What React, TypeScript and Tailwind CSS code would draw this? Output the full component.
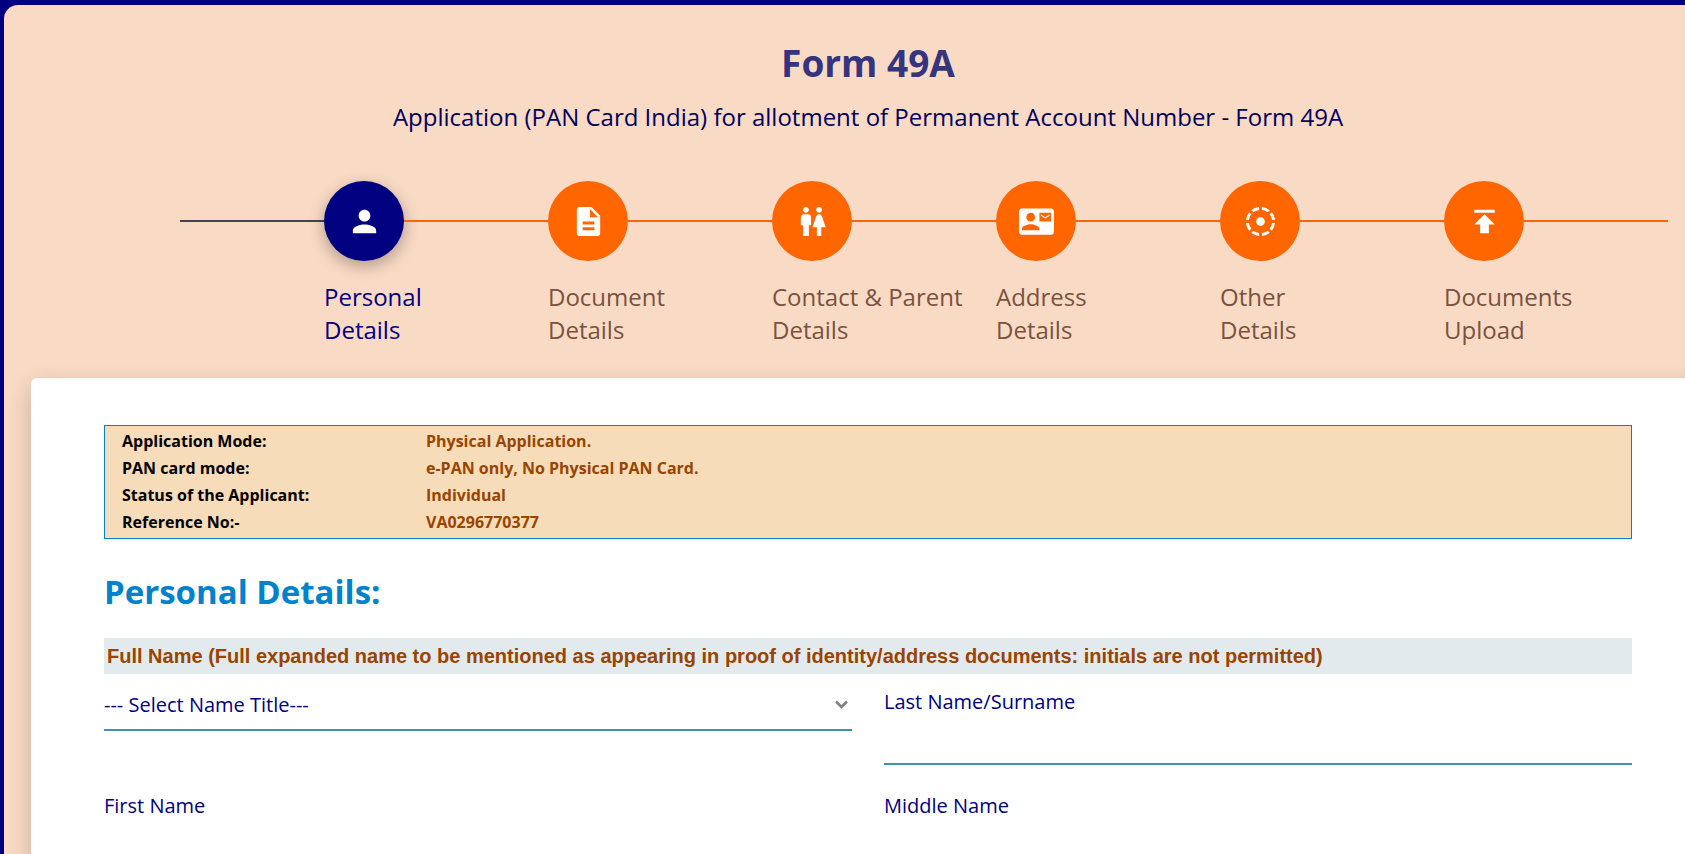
import type { IconType } from "react-icons";
import {
  MdContactMail,
  MdDescription,
  MdFilterTiltShift,
  MdPerson,
  MdPublish,
  MdWc,
} from "react-icons/md";

type Step = { lines: [string, string]; icon: IconType; active?: boolean };

const steps: Step[] = [
  { lines: ["Personal", "Details"], icon: MdPerson, active: true },
  { lines: ["Document", "Details"], icon: MdDescription },
  { lines: ["Contact & Parent", "Details"], icon: MdWc },
  { lines: ["Address", "Details"], icon: MdContactMail },
  { lines: ["Other", "Details"], icon: MdFilterTiltShift },
  { lines: ["Documents", "Upload"], icon: MdPublish },
];

const summary = [
  ["Application Mode:", "Physical Application."],
  ["PAN card mode:", "e-PAN only, No Physical PAN Card."],
  ["Status of the Applicant:", "Individual"],
  ["Reference No:-", "VA0296770377"],
];

function StepItem({ step }: { step: Step }) {
  const Icon = step.icon;
  return (
    <li className="min-w-0 flex-1" aria-current={step.active ? "step" : undefined}>
      <div className="flex items-center">
        <button
          type="button"
          aria-label={step.lines.join(" ")}
          className={
            step.active
              ? "flex size-20 shrink-0 items-center justify-center rounded-full bg-[#000080] text-white shadow-[0_5px_16px_rgba(0,0,0,0.3)]"
              : "flex size-20 shrink-0 items-center justify-center rounded-full bg-[#ff6600] text-white"
          }
        >
          <Icon className="size-[35px]" aria-hidden="true" />
        </button>
        <span className="h-[2px] flex-1 bg-[#ff6600]" />
      </div>
      <p
        className={
          step.active
            ? "mt-[19px] text-2xl leading-[33px] text-[#000080]"
            : "mt-[19px] text-2xl leading-[33px] text-[#7a5240]"
        }
      >
        <span className="block whitespace-nowrap">{step.lines[0]}</span>
        <span className="block whitespace-nowrap">{step.lines[1]}</span>
      </p>
    </li>
  );
}

function TextField({ id, label }: { id: string; label: string }) {
  return (
    <div className="flex flex-col">
      <label htmlFor={id} className="text-xl leading-7">
        {label}
      </label>
      <input
        id={id}
        type="text"
        className="h-[49px] w-full border-b-2 border-[#4192b0] bg-transparent text-xl outline-none"
      />
    </div>
  );
}

export default function App() {
  return (
    <div className="h-screen overflow-hidden bg-[#000080] pt-[5px] pl-1 font-['Open_Sans','Noto_Sans',sans-serif]">
      <main className="min-h-full w-[calc(100%+47px)] rounded-tl-[14px] bg-[#f9dac5] px-[27px] pt-9">
        <header className="text-center">
          <h1 className="text-[37px] leading-[44px] font-bold text-[#34347f]">Form 49A</h1>
          <p className="mt-[15px] text-2xl leading-[33px] text-[#00005c]">
            Application (PAN Card India) for allotment of Permanent Account Number - Form 49A
          </p>
        </header>

        <nav aria-label="Form steps" className="mt-12 flex pr-[37px] pl-[149px]">
          <span className="mt-[39px] h-[2px] w-36 shrink-0 bg-[#444450]" />
          <ol className="flex min-w-0 flex-1">
            {steps.map((step) => (
              <StepItem key={step.lines.join(" ")} step={step} />
            ))}
          </ol>
        </nav>

        <section className="mt-8 min-h-[600px] rounded-t-md bg-white px-[73px] pt-[47px] shadow-[0_8px_24px_rgba(0,0,0,0.2)]">
          <dl className="border border-[#0083c9] bg-[#f6dcb9] px-[17px] py-[2px] font-bold">
            {summary.map(([term, value]) => (
              <div key={term} className="flex leading-[27px]">
                <dt className="w-[304px] text-black">{term}</dt>
                <dd className="text-[#994400]">{value}</dd>
              </div>
            ))}
          </dl>

          <h2 className="mt-[31px] text-[33px] leading-[44px] font-bold text-[#0083c9]">
            Personal Details:
          </h2>

          <form className="mt-6 text-[#000080]">
            <fieldset>
              <legend className="w-full bg-[#e3eaed] px-[3px] font-['Liberation_Sans',Arial,sans-serif] text-xl leading-9 font-bold text-[#994400]">
                Full Name (Full expanded name to be mentioned as appearing in proof of
                identity/address documents: initials are not permitted)
              </legend>
              <div className="grid grid-cols-2 gap-x-8 gap-y-[27px] pt-[14px]">
                <div className="relative self-start">
                  <select
                    aria-label="Name title"
                    className="h-[43px] w-full appearance-none border-b-2 border-[#4192b0] bg-transparent pb-2 text-xl outline-none"
                  >
                    <option>--- Select Name Title---</option>
                  </select>
                  <svg
                    className="pointer-events-none absolute top-3 right-1 h-[9px] w-[13px]"
                    viewBox="0 0 13 9"
                    fill="none"
                    stroke="#808080"
                    strokeWidth="2.6"
                    aria-hidden="true"
                  >
                    <path d="M1 1.5L6.5 7L12 1.5" />
                  </svg>
                </div>
                <TextField id="last-name" label="Last Name/Surname" />
                <TextField id="first-name" label="First Name" />
                <TextField id="middle-name" label="Middle Name" />
              </div>
            </fieldset>
          </form>
        </section>
      </main>
    </div>
  );
}
